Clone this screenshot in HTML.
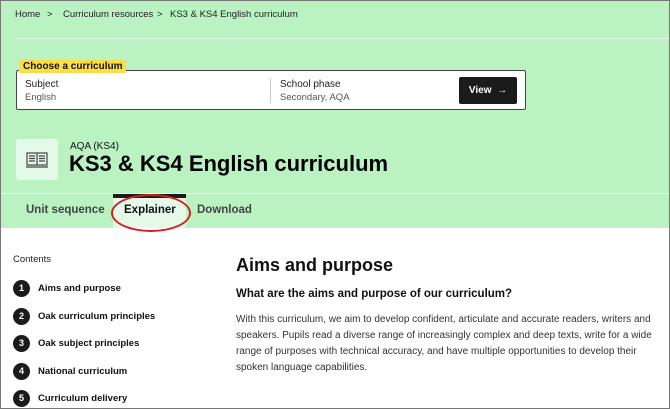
<!DOCTYPE html>
<html><head><style>
*{margin:0;padding:0;box-sizing:border-box}
body{width:670px;height:409px;overflow:hidden;font-family:"Liberation Sans",sans-serif;background:#fff;position:relative}
.frame{position:absolute;inset:0;border:1px solid #777;z-index:10;pointer-events:none}
.hero{position:absolute;left:0;top:0;width:670px;height:228px;background:#bbf2c2}
.a{position:absolute;white-space:nowrap}
.bc{top:9px;font-size:9.5px;color:#222}
.line{position:absolute;height:1px;background:#e6fbe9}
.box{position:absolute;left:16px;top:70px;width:510px;height:40px;background:#fff;border:1.5px solid #444;border-radius:2px}
.lab{left:19px;top:60px;background:#fddd48;font-size:10px;font-weight:bold;padding:1px 4px;color:#111}
.btn{left:459px;top:77px;width:58px;height:27px;background:#1b1b1b;color:#fff;font-size:10px;font-weight:bold;border-radius:2px;text-align:center;line-height:27px}
.icon{left:16px;top:139px;width:42px;height:41px;background:#e5f9e8;border-radius:3px}
.num{position:absolute;left:13px;width:17px;height:17px;border-radius:50%;background:#1b1b1b;color:#fff;font-size:9px;font-weight:bold;text-align:center;line-height:17px}
.ci{left:38px;font-size:9.5px;font-weight:bold;color:#111}
p.a{white-space:normal}
</style></head><body>
<div class="hero"></div>
<div class="a bc" style="left:15px">Home</div>
<div class="a bc" style="left:47px">&gt;</div>
<div class="a bc" style="left:63px">Curriculum resources</div>
<div class="a bc" style="left:157px">&gt;</div>
<div class="a bc" style="left:170px">KS3 &amp; KS4 English curriculum</div>
<div class="line" style="left:16px;top:38px;width:654px"></div>
<div class="box"></div>
<div class="a lab">Choose a curriculum</div>
<div class="a" style="left:25px;top:79px;font-size:10px;color:#222">Subject</div>
<div class="a" style="left:25px;top:92px;font-size:9.5px;color:#555">English</div>
<div style="position:absolute;left:270px;top:78px;width:1px;height:25px;background:#ccc"></div>
<div class="a" style="left:280px;top:79px;font-size:10px;color:#222">School phase</div>
<div class="a" style="left:280px;top:92px;font-size:9.5px;color:#555">Secondary, AQA</div>
<div class="a btn">View &nbsp;→</div>
<div class="a icon"><svg width="42" height="41" viewBox="0 0 42 41"><g fill="none" stroke="#444" stroke-width="1.2"><rect x="11" y="14" width="20" height="12"/><line x1="21" y1="14" x2="21" y2="26"/><path d="M13 17h6M13 19.5h6M13 22h6M23 17h6M23 19.5h6M23 22h6"/><path d="M10 28h22"/></g></svg></div>
<div class="a" style="left:70px;top:141px;font-size:10px;color:#111">AQA (KS4)</div>
<div class="a" style="left:69px;top:151px;font-size:22px;font-weight:bold;color:#000">KS3 &amp; KS4 English curriculum</div>
<div class="line" style="left:0;top:193px;width:670px"></div>
<div style="position:absolute;left:113px;top:194px;width:73px;height:34px;background:#e5f9e8"></div>
<div style="position:absolute;left:113px;top:194px;width:73px;height:4px;background:#1b1b1b"></div>
<div class="a" style="left:26px;top:204px;font-size:11.5px;font-weight:bold;color:#444">Unit sequence</div>
<div class="a" style="left:124px;top:204px;font-size:11.5px;font-weight:bold;color:#111">Explainer</div>
<div class="a" style="left:197px;top:204px;font-size:11.5px;font-weight:bold;color:#444">Download</div>
<div style="position:absolute;left:111px;top:194px;width:80px;height:38px;border:2px solid #d42020;border-radius:50%"></div>
<div class="a" style="left:13px;top:254px;font-size:9.5px;color:#222">Contents</div>
<div class="num" style="top:280px">1</div><div class="a ci" style="top:283px">Aims and purpose</div>
<div class="num" style="top:308px">2</div><div class="a ci" style="top:311px">Oak curriculum principles</div>
<div class="num" style="top:335px">3</div><div class="a ci" style="top:338px">Oak subject principles</div>
<div class="num" style="top:363px">4</div><div class="a ci" style="top:366px">National curriculum</div>
<div class="num" style="top:390px">5</div><div class="a ci" style="top:393px">Curriculum delivery</div>
<div class="a" style="left:236px;top:255px;font-size:18px;font-weight:bold;color:#111">Aims and purpose</div>
<div class="a" style="left:236px;top:288px;font-size:11.5px;font-weight:bold;color:#111">What are the aims and purpose of our curriculum?</div>
<p class="a" style="left:236px;top:312px;width:425px;font-size:10px;line-height:16px;color:#333">With this curriculum, we aim to develop confident, articulate and accurate readers, writers and speakers. Pupils read a diverse range of increasingly complex and deep texts, write for a wide range of purposes with technical accuracy, and have multiple opportunities to develop their spoken language capabilities.</p>
<div class="frame"></div>
</body></html>
